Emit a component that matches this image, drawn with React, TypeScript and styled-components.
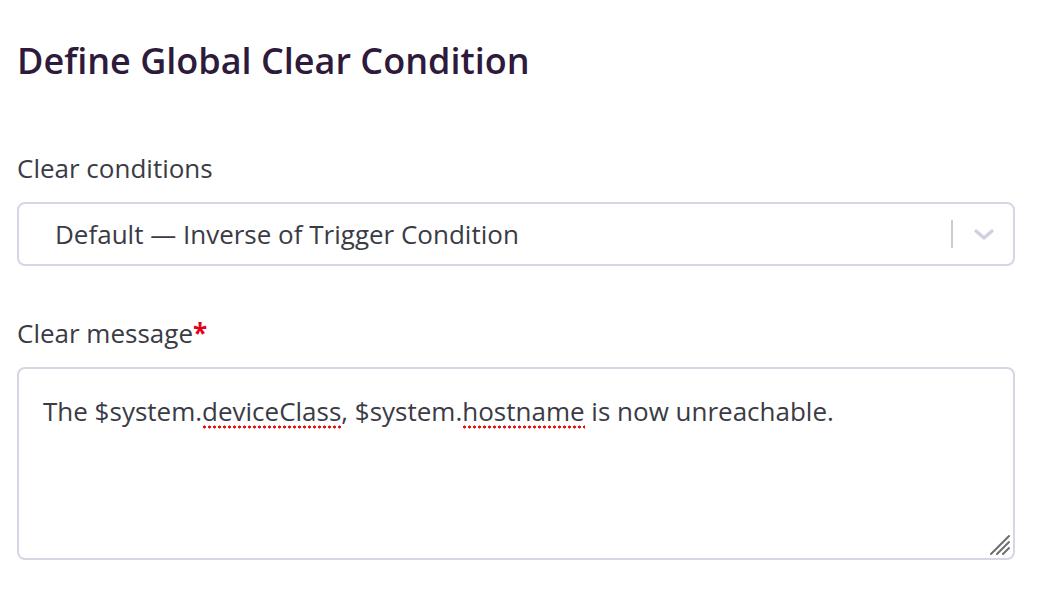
import React from "react";
import styled, { createGlobalStyle } from "styled-components";

const Global = createGlobalStyle`
  html, body { margin: 0; padding: 0; background: #ffffff; }
  body { font-family: "Open Sans", "Noto Sans", sans-serif; }
`;

const Page = styled.div`
  width: 1044px;
  height: 610px;
  box-sizing: border-box;
  padding: 37px 29px 0 17px;
  display: flex;
  flex-direction: column;
`;

const Title = styled.h1`
  margin: 0;
  font-size: 36px;
  line-height: 48px;
  font-weight: 600;
  color: #2e1a3b;
  letter-spacing: 0;
`;

const Field = styled.div<{ $top: number }>`
  display: flex;
  flex-direction: column;
  gap: 17px;
  margin-top: ${(p) => p.$top}px;
`;

const Label = styled.label`
  font-size: 26px;
  line-height: 34px;
  color: #3a3b45;
`;

const Required = styled.span`
  color: #e6001b;
  font-weight: 700;
`;

const Select = styled.div`
  height: 64px;
  box-sizing: border-box;
  border: 2px solid #d8d5e6;
  border-radius: 8px;
  display: flex;
  align-items: center;
  padding: 0 18px 0 36px;
`;

const SelectValue = styled.span`
  flex: 1;
  font-size: 26px;
  color: #3a3b45;
`;

const Separator = styled.span`
  width: 2px;
  height: 28px;
  background: #cccccc;
  margin-right: 20px;
`;

const Chevron = styled.svg`
  width: 22px;
  height: 22px;
  display: block;
`;

const TextArea = styled.div`
  position: relative;
  height: 193px;
  box-sizing: border-box;
  border: 2px solid #d8d5e6;
  border-radius: 8px;
  padding: 25px 24px;
  font-size: 26px;
  line-height: 34px;
  color: #3a3b45;
`;

const Misspelled = styled.span`
  background-image: radial-gradient(circle, #f01010 1.3px, transparent 1.8px);
  background-repeat: repeat-x;
  background-size: 5px 4px;
  background-position: 0 32px;
`;

const Grip = styled.svg`
  position: absolute;
  right: 2px;
  bottom: 2px;
  width: 26px;
  height: 26px;
`;

export default function App() {
  return (
    <>
      <Global />
      <Page>
        <Title>Define Global Clear Condition</Title>
        <Field $top={66}>
          <Label>Clear conditions</Label>
          <Select>
            <SelectValue>Default — Inverse of Trigger Condition</SelectValue>
            <Separator />
            <Chevron viewBox="0 0 22 22">
              <path d="M3 8 L11 15 L19 8" fill="none" stroke="#d2d0e0" strokeWidth="3.4" strokeLinecap="round" strokeLinejoin="round" />
            </Chevron>
          </Select>
        </Field>
        <Field $top={50}>
          <Label>
            Clear message<Required>*</Required>
          </Label>
          <TextArea>
            The $system.<Misspelled>deviceClass</Misspelled>, $system.<Misspelled>hostname</Misspelled> is now unreachable.
            <Grip viewBox="0 0 26 26">
              <g stroke="#6d6d6d" strokeWidth="2" strokeLinecap="round">
                <line x1="24" y1="6" x2="6" y2="24" />
                <line x1="24" y1="12" x2="12" y2="24" />
                <line x1="24" y1="18" x2="18" y2="24" />
              </g>
            </Grip>
          </TextArea>
        </Field>
      </Page>
    </>
  );
}
